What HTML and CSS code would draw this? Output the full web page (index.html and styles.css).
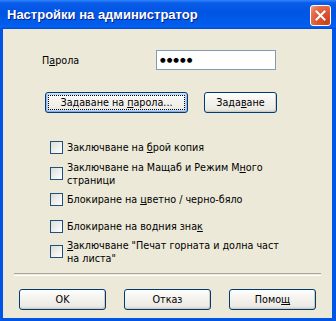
FILE: index.html
```html
<!DOCTYPE html>
<html lang="bg">
<head>
    <meta charset="UTF-8">
    <title>Настройки на администратор</title>
    <link rel="stylesheet" href="styles.css">
</head>
<body>
    <div class="window">
        <div class="titlebar">
            <span class="title">Настройки на администратор</span>
            <button class="close" aria-label="Затвори">
                <svg width="11" height="11" viewBox="0 0 11 11">
                    <path d="M1.5 1.5 L9.5 9.5 M9.5 1.5 L1.5 9.5" stroke="#fff" stroke-width="2" stroke-linecap="square"/>
                </svg>
            </button>
        </div>

        <div class="client">
            <div class="pw-row">
                <label class="pw-label">П<u>а</u>рола</label>
                <div class="pw-field"><span class="dots">●●●●●</span></div>
            </div>

            <div class="btn-row">
                <button class="btn btn-wide focused">Задаване на <u>п</u>арола...</button>
                <button class="btn btn-set">Зада<u>в</u>ане</button>
            </div>

            <div class="checks">
                <div class="check one"><span class="box"></span><span class="text">Заключване на <u>б</u>рой копия</span></div>
                <div class="check two"><span class="box"></span><span class="text">Заключване на Мащаб и Режим М<u>н</u>ого<br>страници</span></div>
                <div class="check three"><span class="box"></span><span class="text">Блокиране на <u>ц</u>ветно / черно-бяло</span></div>
                <div class="check four"><span class="box"></span><span class="text">Блокиране на водния зна<u>к</u></span></div>
                <div class="check five"><span class="box"></span><span class="text"><u>З</u>аключване "Печат горната и долна част<br>на листа"</span></div>
            </div>

            <div class="separator"></div>

            <div class="footer">
                <button class="btn btn-foot">OK</button>
                <button class="btn btn-foot">Отказ</button>
                <button class="btn btn-foot">Помо<u>щ</u></button>
            </div>
        </div>
    </div>
</body>
</html>
```

FILE: styles.css
```css
body {
    margin: 0;
    background: #fff;
}
.window {
    width: 336px;
    height: 321px;
    box-sizing: border-box;
    padding: 0 4px 3px 3px;
    background: #0055e5;
    display: flex;
    flex-direction: column;
    font-family: 'DejaVu Sans Condensed', 'DejaVu Sans', sans-serif;
    font-size: 10.7px;
    color: #000;
}
.titlebar {
    height: 29px;
    margin: 0 -4px 0 -3px;
    padding: 0 5px 0 7px;
    display: flex;
    align-items: center;
    justify-content: space-between;
    background: linear-gradient(180deg, #2f86ff 0, #0a5ce6 10%, #0055e3 40%, #005ded 85%, #0662f0 92%, #0452e0 96%, #0049d8 100%);
}
.title {
    color: #fff;
    font-family: 'Liberation Sans', Arial, sans-serif;
    font-weight: bold;
    font-size: 13px;
    text-shadow: 1px 1px #0a1f8c;
}
.close {
    width: 21px;
    height: 21px;
    padding: 0;
    margin-top: 2px;
    border: 1px solid #fff;
    border-radius: 3px;
    background: radial-gradient(circle at 85% 85%, #c8401c 0, #df5531 45%, #e6704f 75%, #f2a58d 100%);
    display: flex;
    align-items: center;
    justify-content: center;
}
.client {
    flex: 1;
    background: #ece9d8;
    display: flex;
    flex-direction: column;
}
.pw-row {
    display: flex;
    align-items: center;
    margin-top: 21px;
    padding-left: 39px;
}
.pw-label {
    width: 114px;
}
.pw-field {
    width: 120px;
    height: 20px;
    box-sizing: border-box;
    border: 1px solid #7f9db9;
    background: #fff;
    display: flex;
    align-items: center;
    padding-left: 3px;
}
.dots {
    font-family: 'DejaVu Sans', sans-serif;
    font-size: 6.5px;
    letter-spacing: 1px;
}
.btn {
    height: 21px;
    padding: 0;
    box-sizing: border-box;
    font-family: 'DejaVu Sans Condensed', 'DejaVu Sans', sans-serif;
    font-size: 10.7px;
    color: #000;
    border: 1px solid #003c74;
    border-radius: 3px;
    background: linear-gradient(180deg, #fff 0, #f4f3ee 40%, #ecebe6 85%, #d6d0c5 100%);
    box-shadow: inset -1px -1px 0 #d1ccc1;
}
.btn.focused {
    box-shadow: inset 0 1px 0 #cee7ff, inset 1px 0 0 #98b8ea, inset -1px 0 0 #98b8ea, inset 0 -1px 0 #89ade4, inset 0 0 0 2px #bcd4f6;
    outline: 1px dotted #000;
    outline-offset: -4px;
}
.btn-row {
    display: flex;
    gap: 16px;
    margin-top: 22px;
    padding-left: 42px;
}
.btn-wide {
    width: 143px;
}
.btn-set {
    width: 73px;
}
.checks {
    display: flex;
    flex-direction: column;
    padding-left: 47px;
}
.check {
    display: flex;
    align-items: center;
    gap: 4px;
    line-height: 13px;
}
.check.one { margin-top: 28px; }
.check.two { margin-top: 6px; height: 27px; }
.check.three { margin-top: 6px; }
.check.four { margin-top: 14px; }
.check.five { margin-top: 5px; height: 27px; }
.box {
    width: 13px;
    height: 13px;
    flex: none;
    box-sizing: border-box;
    border: 1px solid #1c5180;
    background: linear-gradient(135deg, #dcdcd7 0, #fff 100%);
}
.separator {
    margin: 8px 11px 0;
    height: 1px;
    border-top: 1px solid #aca899;
    border-bottom: 1px solid #fff;
}
.footer {
    display: flex;
    gap: 18px;
    margin-top: 13px;
    padding-left: 16px;
}
.btn-foot {
    width: 87px;
}
```
